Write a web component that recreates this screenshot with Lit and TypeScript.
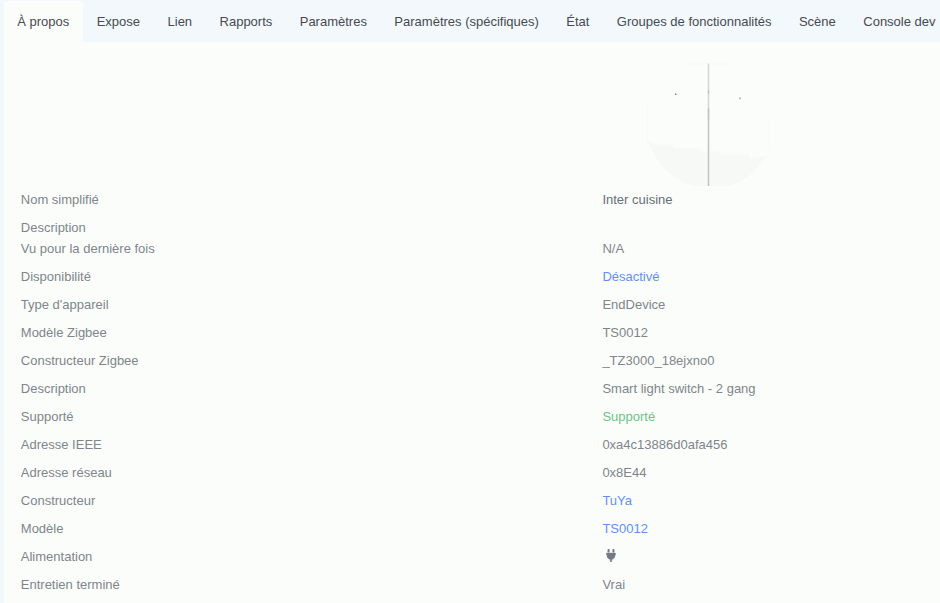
import { LitElement, html, css, svg } from "lit";
import { customElement } from "lit/decorators.js";
import { classMap } from "lit/directives/class-map.js";

const TABS = ["À propos", "Expose", "Lien", "Rapports", "Paramètres", "Paramètres (spécifiques)", "État", "Groupes de fonctionnalités", "Scène", "Console dev"];

interface Row { label: string; value: string; kind?: string }

const ROWS: Row[] = [
  { label: "Nom simplifié", value: "Inter cuisine", kind: "name" },
  { label: "Description", value: "", kind: "empty" },
  { label: "Vu pour la dernière fois", value: "N/A" },
  { label: "Disponibilité", value: "Désactivé", kind: "link" },
  { label: "Type d'appareil", value: "EndDevice" },
  { label: "Modèle Zigbee", value: "TS0012" },
  { label: "Constructeur Zigbee", value: "_TZ3000_18ejxno0" },
  { label: "Description", value: "Smart light switch - 2 gang" },
  { label: "Supporté", value: "Supporté", kind: "ok" },
  { label: "Adresse IEEE", value: "0xa4c13886d0afa456" },
  { label: "Adresse réseau", value: "0x8E44" },
  { label: "Constructeur", value: "TuYa", kind: "link" },
  { label: "Modèle", value: "TS0012", kind: "link" },
  { label: "Alimentation", value: "", kind: "plug" },
  { label: "Entretien terminé", value: "Vrai" },
];

const device = svg`
  <path d="M3 85 L8 85 8 87 28 87 28 90 55 91 55 94 76 94 76 97 104 97 104 101 121 99 Q106 122 84 128.5 L48 128.5 Q18 120 3 85Z" fill="#f7f9f7"/>
  <path d="M41 6.5H84M2.5 47V86M124.5 62V90" stroke="#f7f9f7" fill="none"/>
  <path d="M63.5 6V62" stroke="#d7d8d7" stroke-width="1.6"/>
  <path d="M63.5 33V36" stroke="#bbbcbb" stroke-width="1.2"/>
  <path d="M63.5 51V128.5" stroke="#c1c2c1" stroke-width="1.5"/>
  <rect x="30" y="36" width="1.4" height="1.4" fill="#777"/>
  <rect x="94" y="40" width="2" height="1.8" fill="#bcbdbc"/>`;

@customElement("app-root")
export class AppRoot extends LitElement {
  static styles = css`
    :host {
      display: block;
      box-sizing: border-box;
      height: 603px;
      overflow: hidden;
      padding: 1px 0 0 3.5px;
      background: #f3f8fd;
      font: 13px/20px "Liberation Sans", Arial, sans-serif;
      color: #7f858c;
    }
    .tabs { display: flex; height: 41px; width: 1000px; }
    .tab {
      flex: none;
      box-sizing: border-box;
      padding: 11px 13.72px 0;
      color: #464a50;
      white-space: nowrap;
    }
    .tab.active { background: #fbfdfa; }
    .panel { height: 561px; background: #fbfdfa; }
    .picture { display: block; width: 130px; height: 132px; padding: 15.5px 0 0 641px; }
    .details { display: grid; grid-template-columns: 581.6px 1fr; margin: 0; padding-left: 17.3px; }
    dt, dd { margin: 0; height: 28px; white-space: nowrap; }
    .empty { height: 21px; }
    .name { color: #686e76; }
    .link { color: #6390f2; }
    .ok { color: #6cc488; }
    .plug svg { display: block; margin: 2px 0 0 3.3px; }
  `;

  render() {
    return html`
      <nav class="tabs">
        ${TABS.map((t, i) => html`<div class=${classMap({ tab: true, active: i === 0 })}>${t}</div>`)}
      </nav>
      <main class="panel">
        <svg class="picture" viewBox="0 0 130 132">${device}</svg>
        <dl class="details">
          ${ROWS.map((r) => html`
            <dt class=${r.kind === "empty" ? "empty" : ""}>${r.label}</dt>
            <dd class=${r.kind ?? ""}>${r.kind === "plug"
              ? html`<svg width="10" height="13" viewBox="0 0 384 512" fill="#747a82"><path d="M96 0C78 0 64 14 64 32v96h64V32c0-18-14-32-32-32zM288 0c-18 0-32 14-32 32v96h64V32c0-18-14-32-32-32zM32 160c-18 0-32 14-32 32s14 32 32 32v32c0 77 55 142 128 157v67c0 18 14 32 32 32s32-14 32-32v-67c73-15 128-80 128-157v-32c18 0 32-14 32-32s-14-32-32-32H32z" stroke="#747a82" stroke-width="14"/></svg>`
              : r.value}</dd>`)}
        </dl>
      </main>`;
  }
}
